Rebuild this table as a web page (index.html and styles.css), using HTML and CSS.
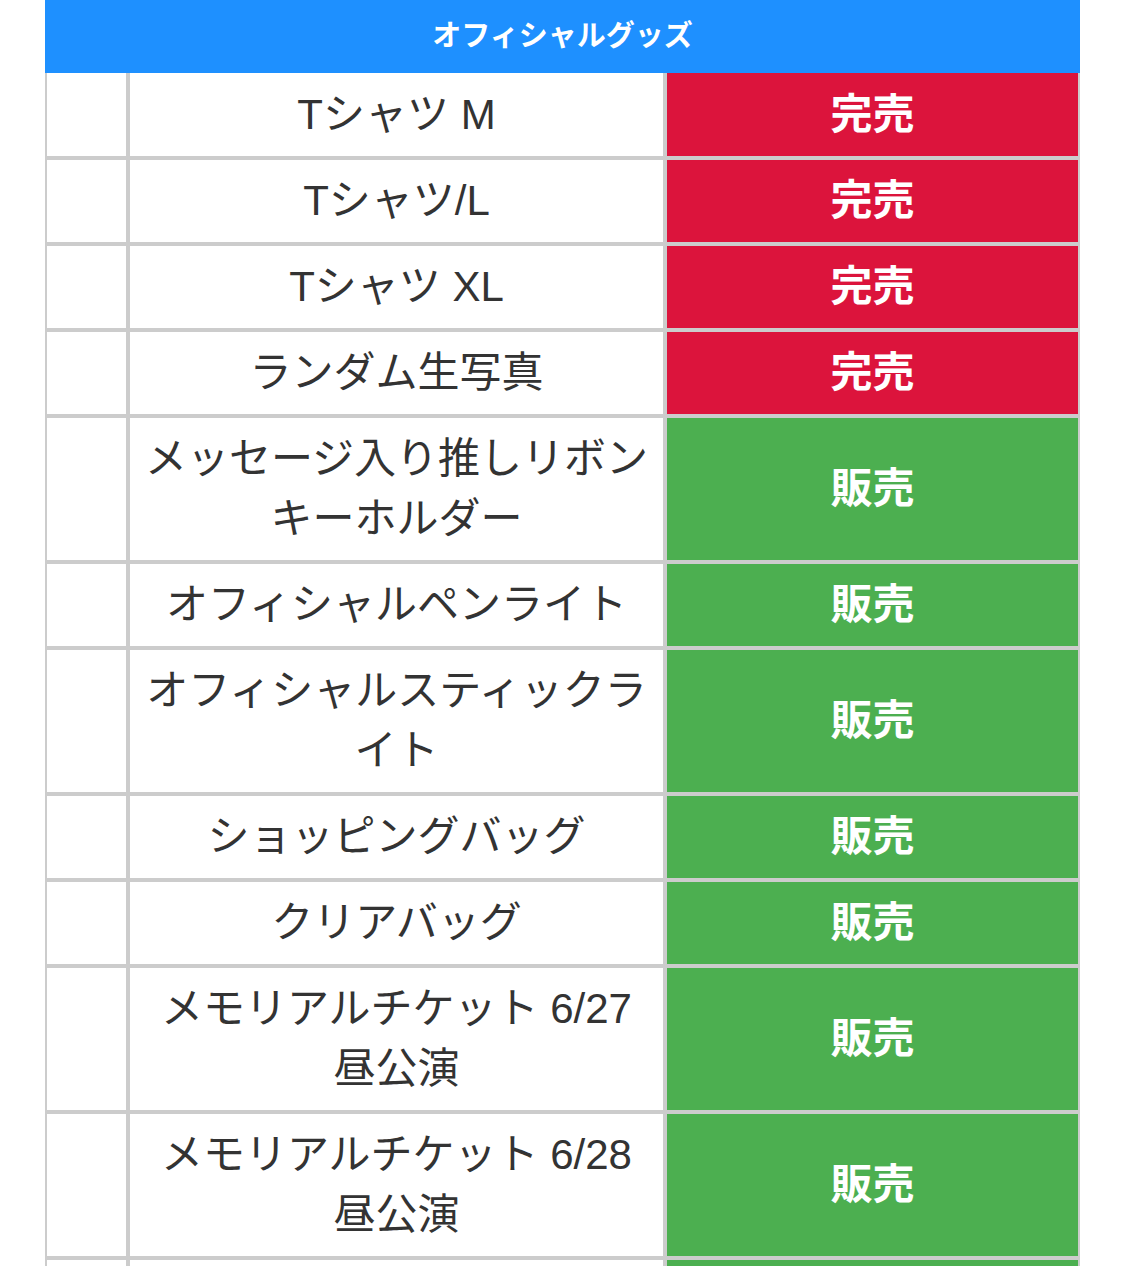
FILE: index.html
```html
<!DOCTYPE html>
<html lang="ja">
<head>
<meta charset="utf-8">
<title>オフィシャルグッズ</title>
<link rel="stylesheet" href="styles.css">
</head>
<body>
<table class="goods">
  <colgroup>
    <col class="col-blank">
    <col class="col-name">
    <col class="col-status">
  </colgroup>
  <thead>
    <tr><th colspan="3" class="goods-title">オフィシャルグッズ</th></tr>
  </thead>
  <tbody>
    <tr class="first"><td></td><td class="name">Tシャツ M</td><td class="status soldout">完売</td></tr>
    <tr><td></td><td class="name">Tシャツ/L</td><td class="status soldout">完売</td></tr>
    <tr><td></td><td class="name">Tシャツ XL</td><td class="status soldout">完売</td></tr>
    <tr><td></td><td class="name">ランダム生写真</td><td class="status soldout">完売</td></tr>
    <tr><td></td><td class="name">メッセージ入り推しリボンキーホルダー</td><td class="status onsale">販売</td></tr>
    <tr><td></td><td class="name">オフィシャルペンライト</td><td class="status onsale">販売</td></tr>
    <tr><td></td><td class="name">オフィシャルスティックライト</td><td class="status onsale">販売</td></tr>
    <tr><td></td><td class="name">ショッピングバッグ</td><td class="status onsale">販売</td></tr>
    <tr><td></td><td class="name">クリアバッグ</td><td class="status onsale">販売</td></tr>
    <tr><td></td><td class="name">メモリアルチケット 6/27 昼公演</td><td class="status onsale">販売</td></tr>
    <tr><td></td><td class="name">メモリアルチケット 6/28 昼公演</td><td class="status onsale">販売</td></tr>
    <tr><td></td><td class="name">マフラータオル</td><td class="status onsale">販売</td></tr>
  </tbody>
</table>
</body>
</html>
```
FILE: styles.css
```css
html, body {
  margin: 0;
  padding: 0;
  background: #ffffff;
}

body {
  font-family: "Liberation Sans", "Noto Sans CJK JP", sans-serif;
  color: #333333;
}

.goods {
  width: 1035px;
  margin: 0 auto;
  border-collapse: separate;
  border-spacing: 0;
  table-layout: fixed;
}

.col-blank { width: 83px; }
.col-name { width: 537px; }
.col-status { width: 415px; }

.goods-title {
  height: 73px;
  padding: 0;
  background: #1e90ff;
  color: #ffffff;
  font-size: 29px;
  font-weight: 700;
  text-align: center;
  vertical-align: middle;
  line-height: 1;
}

.goods td {
  border: 2px solid #cccccc;
  padding: 11px 12px;
  font-size: 42px;
  line-height: 60px;
  text-align: center;
  vertical-align: middle;
}

.goods tr.first td {
  border-top: none;
  padding-top: 12px;
}

.name {
  color: #333333;
}

.status {
  color: #ffffff;
  font-weight: 700;
  font-size: 41px;
}

.soldout {
  background: #dc143c;
}

.onsale {
  background: #4caf50;
}
```
